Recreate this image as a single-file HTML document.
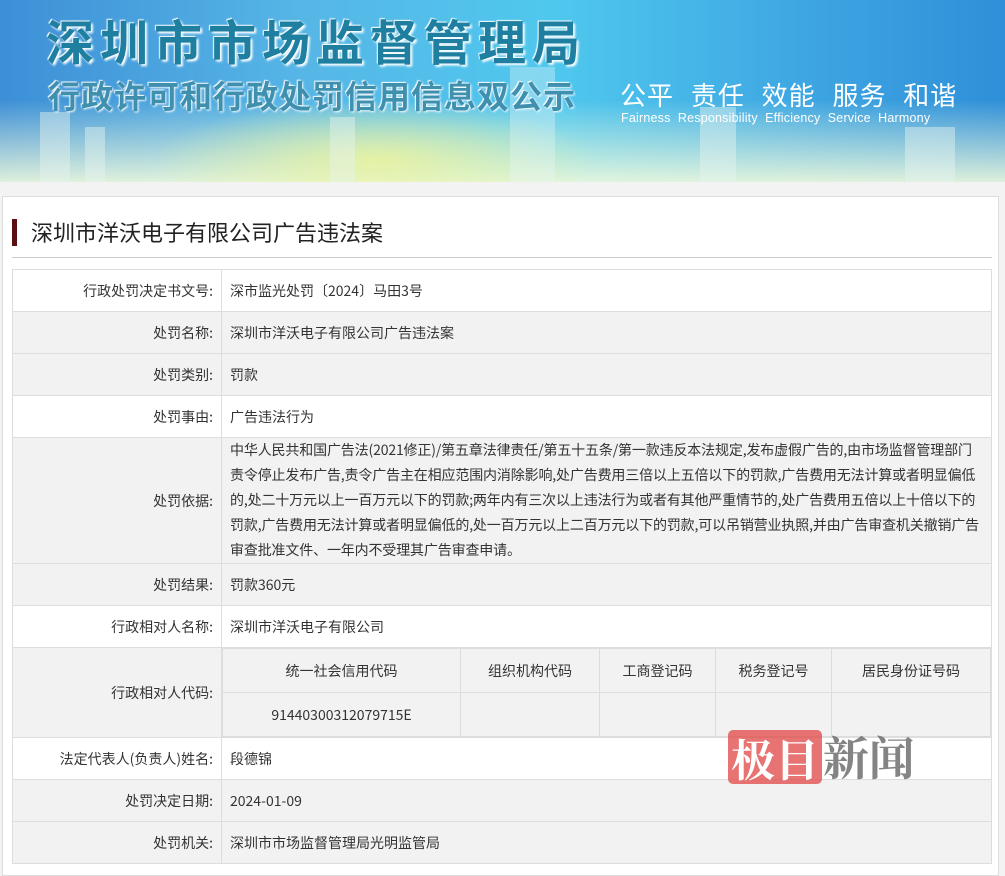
<!DOCTYPE html>
<html><head><meta charset="utf-8"><style>
*{margin:0;padding:0;box-sizing:border-box}
body{width:1005px;height:867px;overflow:hidden;background:#f3f3f3;font-family:"Liberation Sans","Noto Sans CJK SC",sans-serif;position:relative}
.hdr{position:absolute;left:0;top:0;width:1005px;height:182px;background:linear-gradient(180deg,rgba(255,255,255,0) 55%,rgba(240,250,220,.9) 100%),linear-gradient(90deg,#3d8fd6 0%,#56b6e6 30%,#4fc8ee 55%,#3ea6e2 80%,#2f8fd8 100%);overflow:hidden}
.hdr .glow{position:absolute;left:150px;top:100px;width:450px;height:120px;background:radial-gradient(ellipse at center,rgba(240,245,150,.8),rgba(240,245,150,0) 70%)}
.bld{position:absolute;bottom:0;background:rgba(230,245,240,.45)}
.t1{position:absolute;left:46px;top:4px;font-size:48px;font-weight:bold;color:#1f7fa0;letter-spacing:6px;text-shadow:2px 2px 2px #fff,-1px -1px 1px #fff;font-family:"Noto Sans CJK SC",sans-serif}
.t2{position:absolute;left:48px;top:72px;font-size:32px;font-weight:bold;color:#3f8fae;letter-spacing:1px;text-shadow:1px 1px 2px #fff,-1px -1px 1px #fff;font-family:"Noto Sans CJK SC",sans-serif}
.t3{position:absolute;left:620px;top:76px;font-size:26px;color:#fff;word-spacing:10px;letter-spacing:1px;font-family:"Noto Sans CJK SC",sans-serif;white-space:nowrap}
.t4{position:absolute;left:621px;top:111px;font-size:12.5px;color:#fff;white-space:nowrap;letter-spacing:.2px}
.box{position:absolute;left:2px;top:196px;width:997px;height:680px;background:#fff;border:1px solid #ddd}
.title{position:absolute;left:12px;top:219px;height:27px;border-left:5px solid #5a1010;padding-left:14px;font-size:22px;line-height:27px;color:#222;font-family:"Noto Sans CJK SC",sans-serif}
.line{position:absolute;left:12px;top:257px;width:980px;border-top:1px solid #ccc}
table.m{position:absolute;left:12px;top:269px;width:980px;border-collapse:collapse;font-size:14px;color:#333;font-family:"Noto Sans CJK SC",sans-serif}
table.m td{border:1px solid #ddd;padding:0 8px;vertical-align:middle}
table.m td.l{width:209px;text-align:right}
.g{background:#f2f2f2}
.w{background:#fff}
table.s{width:100%;border-collapse:collapse}
table.s td{border:1px solid #ddd;text-align:center;height:44px;padding:0}
.wm{position:absolute;left:728px;top:730px;width:94px;height:54px;background:rgba(225,80,80,.8);border-radius:5px;color:#fff;font-size:44px;line-height:54px;text-align:center;font-family:"Noto Serif CJK SC",serif;font-weight:bold}
.wm2{position:absolute;left:823px;top:728px;font-size:46px;line-height:56px;color:rgba(110,110,110,.85);font-family:"Noto Serif CJK SC",serif;font-weight:bold}
</style></head><body>
<div class="hdr">
<div class="glow"></div>
<div class="bld" style="left:40px;width:30px;height:70px"></div>
<div class="bld" style="left:85px;width:20px;height:55px"></div>
<div class="bld" style="left:330px;width:25px;height:65px"></div>
<div class="bld" style="left:510px;width:45px;height:115px;background:rgba(235,245,245,.35)"></div>
<div class="bld" style="left:700px;width:36px;height:75px"></div>
<div class="bld" style="left:905px;width:50px;height:55px"></div>
<div class="t1">深圳市市场监督管理局</div>
<div class="t2">行政许可和行政处罚信用信息双公示</div>
<div class="t3">公平 责任 效能 服务 和谐</div>
<div class="t4">Fairness &nbsp;Responsibility &nbsp;Efficiency &nbsp;Service &nbsp;Harmony</div>
</div>
<div class="box"></div>
<div class="title">深圳市洋沃电子有限公司广告违法案</div>
<div class="line"></div>
<table class="m">
<tr class="w" style="height:42px"><td class="l">行政处罚决定书文号:</td><td>深市监光处罚〔2024〕马田3号</td></tr>
<tr class="g" style="height:42px"><td class="l">处罚名称:</td><td>深圳市洋沃电子有限公司广告违法案</td></tr>
<tr class="g" style="height:42px"><td class="l">处罚类别:</td><td>罚款</td></tr>
<tr class="w" style="height:42px"><td class="l">处罚事由:</td><td>广告违法行为</td></tr>
<tr class="g" style="height:126px"><td class="l">处罚依据:</td><td style="line-height:25px;letter-spacing:-0.15px">中华人民共和国广告法(2021修正)/第五章法律责任/第五十五条/第一款违反本法规定,发布虚假广告的,由市场监督管理部门<br>责令停止发布广告,责令广告主在相应范围内消除影响,处广告费用三倍以上五倍以下的罚款,广告费用无法计算或者明显偏低<br>的,处二十万元以上一百万元以下的罚款;两年内有三次以上违法行为或者有其他严重情节的,处广告费用五倍以上十倍以下的<br>罚款,广告费用无法计算或者明显偏低的,处一百万元以上二百万元以下的罚款,可以吊销营业执照,并由广告审查机关撤销广告<br>审查批准文件、一年内不受理其广告审查申请。</td></tr>
<tr class="g" style="height:42px"><td class="l">处罚结果:</td><td>罚款360元</td></tr>
<tr class="w" style="height:42px"><td class="l">行政相对人名称:</td><td>深圳市洋沃电子有限公司</td></tr>
<tr class="g" style="height:88px"><td class="l">行政相对人代码:</td><td style="padding:0"><table class="s"><tr><td style="width:238px;height:43px">统一社会信用代码</td><td style="width:139px">组织机构代码</td><td style="width:116px">工商登记码</td><td style="width:116px">税务登记号</td><td>居民身份证号码</td></tr><tr><td style="height:43px">91440300312079715E</td><td></td><td></td><td></td><td></td></tr></table></td></tr>
<tr class="w" style="height:42px"><td class="l">法定代表人(负责人)姓名:</td><td>段德锦</td></tr>
<tr class="g" style="height:42px"><td class="l">处罚决定日期:</td><td>2024-01-09</td></tr>
<tr class="g" style="height:42px"><td class="l">处罚机关:</td><td>深圳市市场监督管理局光明监管局</td></tr>
</table>
<div class="wm">极目</div>
<div class="wm2">新闻</div>
</body></html>
